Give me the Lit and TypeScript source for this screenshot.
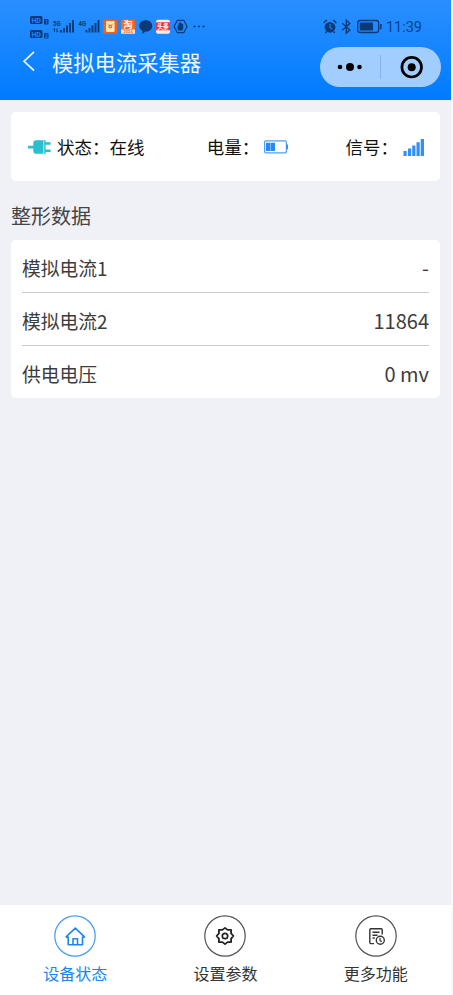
import { LitElement, html, css, svg } from "lit";
import { customElement, property } from "lit/decorators.js";

@customElement("status-strip")
class StatusStrip extends LitElement {
  static styles = css`
    :host { display: flex; justify-content: space-between; height: 24px; padding: 15px 29px 0 29px; color: #0c3a75; }
    svg { display: block; }
    .group { display: flex; }
    text { font-family: Roboto, "Noto Sans CJK SC", sans-serif; font-weight: 700; }
    .clock { font: 400 14.5px/25px Roboto, sans-serif; color: #0b4388; margin-left: 3px; }
  `;
  render() {
    return html`
      <div class="group">
        <svg width="178" height="24" viewBox="29 15 178 24">
          ${[16, 30].map((y, i) => svg`
            <rect x="30" y=${y} width="12.5" height="8" rx="1.5" fill="#0c3a75"/>
            <text x="31.4" y=${y + 6.8} font-size="7.5" textLength="9.5" lengthAdjust="spacingAndGlyphs" fill="#2384fb">HD</text>
            <rect x="44" y=${y + 3} width="4.5" height="5.5" rx="1" fill="#0c3a75"/>
            <text x="45" y=${y + 7.6} font-size="4.8" fill="#2384fb">${i + 1}</text>`)}
          <text x="53" y="25.5" font-size="7.5" textLength="7.5" lengthAdjust="spacingAndGlyphs" fill="#0c3a75">5G</text>
          <path d="M54.5 32v-3.5M53.3 29.5l1.2-1.3M57 28.5V32M58.2 31L57 32.2" stroke="#0c3a75" fill="none"/>
          <path d="M61 32.5v-2.5M64 32.5V28M67 32.5V25.5M70 32.5V23M73 32.5V20" stroke="#0c3a75" stroke-width="1.9"/>
          <text x="78.5" y="25.5" font-size="7.5" textLength="7.5" lengthAdjust="spacingAndGlyphs" fill="#0c3a75">4G</text>
          <path d="M86.5 32.5v-2.5M89.5 32.5V28M92.5 32.5V25.5M95.5 32.5V23M98.5 32.5V20" stroke="#0c3a75" stroke-width="1.9"/>
          <rect x="103.3" y="19.7" width="14" height="14" rx="1.5" fill="#f3601b"/>
          <rect x="106" y="21" width="8.6" height="11" rx="1.3" fill="#ffe9b5"/>
          <path d="M106 23.6q4.3 3 8.6 0" fill="none" stroke="#f3a14b" stroke-width=".7"/>
          <circle cx="110.3" cy="26.6" r="1.9" fill="#ef6a2a"/><circle cx="110.3" cy="26.6" r=".7" fill="#ffe9b5"/>
          <rect x="121" y="19.7" width="14" height="14" rx="1.5" fill="#f16a22"/>
          <text x="123.4" y="28" font-size="9" fill="#fff">淘</text>
          <rect x="121" y="29.5" width="14" height="4.2" fill="#fae3cf"/>
          <text x="123.5" y="33.2" font-size="4" fill="#ef762f">2024</text>
          <path d="M145.7 20.3c3.8 0 6.6 2.4 6.6 5.6s-2.8 5.5-6.3 5.6l-4.1 2.2.6-3c-2-1-3.3-2.7-3.3-4.8 0-3.2 2.8-5.6 6.5-5.6z" fill="#0c3a75"/>
          <rect x="156" y="19.7" width="14" height="14" rx="2" fill="#f8eeee"/>
          <rect x="156" y="22.3" width="14" height="8" fill="#ea3440"/>
          <text x="157.2" y="29.1" font-size="6.5" textLength="11.6" lengthAdjust="spacingAndGlyphs" fill="#fff">头条</text>
          <path d="M177.4 20.3h6.4l3.3 6.2-3.3 6.2h-6.4l-3.3-6.2z" fill="none" stroke="#0c3a75" stroke-width="1.2" stroke-linejoin="round"/>
          <path d="M177.5 25.5l1 .7v-2.800q.6-.7 1 0v-1q.6-.8 1.100 0v.6q.6-.6 1.100 0v1q.7-.5 1.500.2v4q0 2.500-2.900 2.500t-2.800-2.700z" fill="#0c3a75"/>
          <path d="M193.5 26.5h2M198 26.5h2M202.5 26.5h2" stroke="#0c3a75" stroke-width="1.7"/>
        </svg>
      </div>
      <div class="group">
        <svg width="60" height="24" viewBox="323 15 60 24">
          <circle cx="330" cy="27.3" r="5.4" fill="#0c3a75"/>
          <path d="M330 24v3.500l2.200 1.600" fill="none" stroke="#2384fb" stroke-width="1.1"/>
          <path d="M323.8 23.2q.8-2.300 3.300-2.900M336.2 23.2q-.8-2.300-3.300-2.900M326.5 31.5l-1.200 1.500M333.5 31.5l1.200 1.500" fill="none" stroke="#0c3a75" stroke-width="1.4"/>
          <path d="M342.3 23.3l7.500 6.600-3.500 3.300V20.300l3.500 3.200-7.500 6.700" fill="none" stroke="#0c3a75" stroke-width="1.4"/>
          <rect x="357.7" y="20.5" width="21" height="12" rx="2.5" fill="none" stroke="#0c3a75" stroke-width="1.3"/>
          <rect x="359.7" y="22.4" width="13.3" height="8.2" rx=".8" fill="#0c3a75"/>
          <path d="M380.9 24v5.200" stroke="#0c3a75" stroke-width="1.5"/>
        </svg>
        <span class="clock">11:39</span>
      </div>`;
  }
}

@customElement("title-bar")
class TitleBar extends LitElement {
  static styles = css`
    :host { display: flex; align-items: flex-start; height: 61px; padding: 0 10px 0 22px; }
    svg { display: block; }
    .back { margin-top: 12px; }
    h1 { margin: 7px 0 0 15px; flex: 1; color: #eef7ff; font: 400 21.3px/32px "Noto Sans CJK SC", sans-serif; }
    .capsule { display: flex; align-items: center; margin-top: 8px; width: 121px; height: 40px; border-radius: 20px; background: #a2cdff; }
    .half { flex: 1; display: flex; justify-content: center; }
    .rule { width: 1px; height: 24px; background: #82b3ec; }
  `;
  render() {
    return html`
      <svg class="back" width="15" height="21" viewBox="0 0 15 21"><path d="M12 .8L2 10.300l10 9.200" fill="none" stroke="#e8f4ff" stroke-width="1.7"/></svg>
      <h1>模拟电流采集器</h1>
      <div class="capsule">
        <div class="half"><svg width="26" height="10"><circle cx="3" cy="5" r="2.3"/><circle cx="13" cy="5" r="4"/><circle cx="22.5" cy="5" r="2.3"/></svg></div>
        <div class="rule"></div>
        <div class="half"><svg width="24" height="24"><circle cx="12.7" cy="12.2" r="9.8" fill="none" stroke="#000" stroke-width="2.7"/><circle cx="12.7" cy="12.2" r="4"/></svg></div>
      </div>`;
  }
}

@customElement("device-summary")
class DeviceSummary extends LitElement {
  static styles = css`
    :host { display: flex; justify-content: space-between; align-items: center; height: 69px; box-sizing: border-box; padding: 1px 15px 0 17px; background: #fff; border-radius: 5px; color: #111; font: 17.5px/26px "Noto Sans CJK SC", sans-serif; }
    .item { display: flex; align-items: center; white-space: nowrap; }
    svg { display: block; }
    .plug { margin-right: 6px; }
    .power { padding-left: 6px; }
    .battery { margin-left: 5px; }
    .signal { margin-left: 5px; }
  `;
  render() {
    return html`
      <div class="item">
        <svg class="plug" width="23" height="16" viewBox="0 0 23 16"><path d="M0 6.800h5.300V3.500Q5.500 1.500 7.700 1.300H15.500v13.400H7.700Q5.500 14.500 5.300 12.500V9.600H0zM16.200 1h1.400v2.300h5v2.400h-5v4.900h5V13h-5v2.200h-1.400z" fill="#29bfce"/></svg>
        <span>状态：在线</span>
      </div>
      <div class="item power">
        <span>电量：</span>
        <svg class="battery" width="25" height="14" viewBox="0 0 25 14"><rect x=".6" y=".9" width="21.8" height="12" rx="1.3" fill="none" stroke="#4ba0fb" stroke-width="1.2"/><path d="M2 2.700h4.300v8.400H2zM6.700 2.700H11v8.400H6.700z" fill="#2589f8"/><path d="M23.2 4.500v4.800" stroke="#2589f8" stroke-width="1.5"/></svg>
      </div>
      <div class="item">
        <span>信号：</span>
        <svg class="signal" width="22" height="18" viewBox="0 0 22 18"><path d="M.5 13h3.200v5H.5zM5 10.500h3.200V18H5zM9.200 7.500h3.200V18H9.200zM13.500 4.300h3.200V18h-3.200zM17.700 1h3.300v17h-3.300z" fill="#308ffb"/></svg>
      </div>`;
  }
}

@customElement("data-list")
class DataList extends LitElement {
  @property({ attribute: false }) rows: [string, string][] = [];
  static styles = css`
    :host { display: block; height: 158px; box-sizing: border-box; padding: 0 11px; background: #fff; border-radius: 5px; color: #3c3c3c; font-family: "Noto Sans CJK SC", sans-serif; }
    .row { display: flex; justify-content: space-between; align-items: center; height: 53px; box-sizing: border-box; padding-top: 2px; border-bottom: 1px solid #cbcbcb; }
    .row:last-child { border: 0; height: 52px; }
    .label { font-size: 18.8px; }
    .value { font-size: 20px; }
  `;
  render() {
    return this.rows.map(([label, value]) => html`<div class="row"><span class="label">${label}</span><span class="value">${value}</span></div>`);
  }
}

@customElement("tab-bar")
class TabBar extends LitElement {
  static styles = css`
    :host { display: flex; height: 90px; background: #fff; font: 16px/24px "Noto Sans CJK SC", sans-serif; color: #333; }
    .tab { flex: 1; display: flex; flex-direction: column; align-items: center; padding-top: 10px; }
    .active { color: #2086ee; }
    .label { margin-top: 4px; }
    svg { display: block; fill: none; stroke: currentColor; }
    .ring { stroke-width: 1.2; opacity: .85; }
  `;
  render() {
    return html`
      <div class="tab active">
        <svg width="42" height="42" viewBox="0 0 42 42"><circle class="ring" cx="21" cy="21" r="20.2"/><path d="M14.2 21.500v8.300h14.300v-8.300M11.800 22.200l9.500-9 9.500 9M11.800 22.200h2.400M28.500 22.200h2.300M19 29.500v-5.700h4.500v5.700" stroke-width="1.6" stroke-linejoin="round"/></svg>
        <span class="label">设备状态</span>
      </div>
      <div class="tab">
        <svg width="42" height="42" viewBox="0 0 42 42"><circle class="ring" cx="21" cy="21" r="20.2"/><path d="M21 12.900l2.600 2h3.500v3.500l2.300 2.600-2.300 2.600v3.500h-3.500l-2.600 2-2.600-2h-3.500v-3.500L12.600 21l2.300-2.600v-3.500h3.500z" stroke="#222" stroke-width="1.8" stroke-linejoin="round"/><circle cx="21" cy="21" r="2.7" stroke="#222" stroke-width="1.7"/></svg>
        <span class="label">设置参数</span>
      </div>
      <div class="tab">
        <svg width="42" height="42" viewBox="0 0 42 42"><circle class="ring" cx="21" cy="21" r="20.2"/><path d="M19 28.600h-3.200q-1 0-1-1V14.800q0-1 1-1h10.400q1 0 1 1v4.700M17.500 17.300h7M17.500 20.200h5M17.500 23h2.300" stroke-width="1.4"/><circle cx="25.3" cy="25.3" r="4" stroke-width="1.4"/><path d="M25 22.900v2.800l1.700.9" stroke-width="1.2"/></svg>
        <span class="label">更多功能</span>
      </div>`;
  }
}

@customElement("app-root")
class AppRoot extends LitElement {
  static styles = css`
    :host { display: block; width: 453px; height: 995px; background: #f9f9fb; overflow: hidden; }
    .page { display: flex; flex-direction: column; width: 451px; height: 995px; background: #eff1f6; }
    .head { height: 100px; background: linear-gradient(#2a8fff, #007bff); }
    .body { flex: 1; padding: 12px 11px 0; }
    h2 { margin: 19px 0 8px; color: #444; font: 400 20px/32px "Noto Sans CJK SC", sans-serif; }
  `;
  private rows: [string, string][] = [["模拟电流1", "-"], ["模拟电流2", "11864"], ["供电电压", "0 mv"]];
  render() {
    return html`
      <div class="page">
        <div class="head"><status-strip></status-strip><title-bar></title-bar></div>
        <div class="body">
          <device-summary></device-summary>
          <h2>整形数据</h2>
          <data-list .rows=${this.rows}></data-list>
        </div>
        <tab-bar></tab-bar>
      </div>`;
  }
}
